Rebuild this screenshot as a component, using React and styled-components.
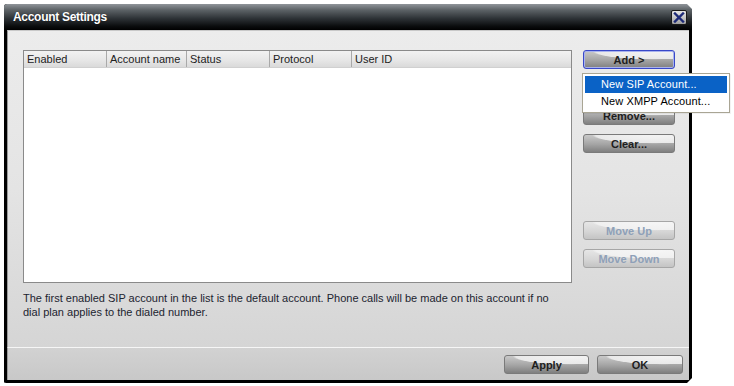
import React from "react";
import styled, { createGlobalStyle, css } from "styled-components";

const GlobalStyle = createGlobalStyle`
  html, body {
    margin: 0;
    padding: 0;
    background: #ffffff;
  }
  body {
    font-family: "Liberation Sans", Arial, sans-serif;
  }
`;

const Page = styled.div`
  padding: 4px;
  width: 734px;
  height: 386px;
  box-sizing: border-box;
`;

const Window = styled.div`
  position: relative;
  width: 688px;
  height: 379px;
  box-sizing: border-box;
  display: flex;
  flex-direction: column;
  border: 3px solid #000;
  border-top: 0;
  border-radius: 3px 0 0 2px;
  background: #d0d0d0;

  &::before,
  &::after {
    content: "";
    position: absolute;
    right: -3px;
    width: 0;
    height: 0;
    border-style: solid;
  }
  &::before {
    top: 0;
    border-width: 0 5px 5px 0;
    border-color: transparent #fff transparent transparent;
  }
  &::after {
    bottom: -3px;
    border-width: 5px 5px 0 0;
    border-color: transparent #fff transparent transparent;
  }
`;

const TitleBar = styled.div`
  height: 26px;
  flex: none;
  display: flex;
  align-items: center;
  justify-content: space-between;
  padding: 0 2px 0 9px;
  margin: 0 -3px;
  border-radius: 3px 0 0 0;
  background: linear-gradient(
    to bottom,
    #90959a 0%,
    #5e6468 22%,
    #2e3337 55%,
    #0b0d0e 85%,
    #000 100%
  );
`;

const Title = styled.span`
  color: #fff;
  font-weight: bold;
  font-size: 12px;
  letter-spacing: -0.3px;
  text-shadow: 0 0 1px rgba(0, 0, 0, 0.6);
`;

const CloseButton = styled.div`
  width: 16px;
  height: 15px;
  margin-right: 3px;
  margin-top: 1px;
  box-sizing: border-box;
  border: 1px solid #1a1a1a;
  border-radius: 2px;
  background: linear-gradient(to bottom, #e6e6e6 0%, #c6c6c6 50%, #9e9e9e 100%);
  display: flex;
  align-items: center;
  justify-content: center;
`;

const Body = styled.div`
  height: 317px;
  flex: none;
  box-sizing: border-box;
  padding: 19px 13px 0 15px;
  display: flex;
  flex-direction: column;
  border-top: 1px solid #c8c8c8;
  border-left: 1px solid #9a9a9a;
  background: linear-gradient(to bottom, #ececec 0%, #e4e4e4 50%, #d5d5d5 100%);
`;

const Main = styled.div`
  display: flex;
  gap: 11px;
`;

const Table = styled.div`
  width: 549px;
  height: 233px;
  box-sizing: border-box;
  border: 1px solid #8a8a8a;
  background: #fff;
  display: flex;
  flex-direction: column;
`;

const HeaderRow = styled.div`
  height: 16px;
  display: flex;
  background: linear-gradient(to bottom, #f2f2f2 0%, #e6e6e6 60%, #dadada 100%);
  border-bottom: 1px solid #d0d0d0;
`;

const HeaderCell = styled.div`
  width: ${p => (p.$w ? `${p.$w}px` : "auto")};
  flex: ${p => (p.$w ? "none" : "1")};
  box-sizing: border-box;
  padding-left: 3px;
  font-size: 11px;
  line-height: 16px;
  color: #222;
  border-right: ${p => (p.$w ? "1px solid #a9a9a9" : "0")};
`;

const Side = styled.div`
  position: relative;
  width: 92px;
  display: flex;
  flex-direction: column;
  gap: 9px;
`;

const Button = styled.div`
  height: 19px;
  width: ${p => p.$w || 92}px;
  box-sizing: border-box;
  border: 1px solid #7a7a7a;
  border-radius: 3px;
  display: flex;
  align-items: center;
  justify-content: center;
  font-size: 11px;
  font-weight: bold;
  color: #1e1e1e;
  background: radial-gradient(
      ellipse 130% 95% at 78% 0%,
      #f4f4f4 0%,
      #e9e9e9 50%,
      rgba(233, 233, 233, 0) 53%
    ),
    linear-gradient(to bottom, #c9c9c9 0%, #a4a4a4 55%, #7f7f7f 100%);
  margin-top: ${p => p.$gapTop || 0}px;

  ${p =>
    p.$focused &&
    css`
      border-color: #3848c8;
      box-shadow: inset 0 0 0 1px #a8b2ee;
    `}

  ${p =>
    p.$disabled &&
    css`
      border-color: #a6a6a6;
      color: #8ea0b8;
      background: radial-gradient(
          ellipse 130% 95% at 78% 0%,
          #f6f6f6 0%,
          #f0f0f0 50%,
          rgba(240, 240, 240, 0) 53%
        ),
        linear-gradient(to bottom, #e6e6e6 0%, #d6d6d6 55%, #c4c4c4 100%);
    `}
`;

const Menu = styled.div`
  position: absolute;
  top: 23px;
  left: -1px;
  width: 148px;
  box-sizing: border-box;
  padding: 2px;
  border: 1px solid #a9a594;
  background: #fff;
  z-index: 2;
  box-shadow: 1px 1px 0 rgba(0, 0, 0, 0.05);
`;

const MenuItem = styled.div`
  height: 17px;
  line-height: 17px;
  padding-left: 16px;
  font-size: 11px;
  letter-spacing: 0.1px;
  color: ${p => (p.$active ? "#fff" : "#000")};
  background: ${p => (p.$active ? "#0a62c6" : "transparent")};
`;

const Note = styled.p`
  margin: 8px 0 0 0;
  font-size: 11px;
  line-height: 14px;
  color: #1c2430;
`;

const Footer = styled.div`
  flex: 1;
  display: flex;
  justify-content: flex-end;
  align-items: flex-start;
  gap: 8px;
  padding: 7px 6px 0 0;
  border-top: 1px solid #f6f6f6;
  border-left: 1px solid #9a9a9a;
  background: linear-gradient(to bottom, #d2d2d2 0%, #c8c8c8 100%);
`;

const CloseIcon = () => (
  <svg width="12" height="11" viewBox="0 0 12 11">
    <path
      d="M2 1.5 L10 9.5 M10 1.5 L2 9.5"
      stroke="#1d2a78"
      strokeWidth="2.4"
      strokeLinecap="square"
    />
  </svg>
);

const columns = [
  { label: "Enabled", w: 83 },
  { label: "Account name", w: 80 },
  { label: "Status", w: 83 },
  { label: "Protocol", w: 82 },
  { label: "User ID" },
];

export default function App() {
  return (
    <Page>
      <GlobalStyle />
      <Window>
        <TitleBar>
          <Title>Account Settings</Title>
          <CloseButton>
            <CloseIcon />
          </CloseButton>
        </TitleBar>
        <Body>
          <Main>
            <Table>
              <HeaderRow>
                {columns.map(c => (
                  <HeaderCell key={c.label} $w={c.w}>
                    {c.label}
                  </HeaderCell>
                ))}
              </HeaderRow>
            </Table>
            <Side>
              <Button $focused>Add &gt;</Button>
              {/* hidden under the open menu */}
              <Button aria-hidden="true" />
              <Button>Remove...</Button>
              <Button>Clear...</Button>
              <Button $disabled $gapTop={59}>
                Move Up
              </Button>
              <Button $disabled>Move Down</Button>
              <Menu>
                <MenuItem $active>New SIP Account...</MenuItem>
                <MenuItem>New XMPP Account...</MenuItem>
              </Menu>
            </Side>
          </Main>
          <Note>
            The first enabled SIP account in the list is the default account. Phone
            calls will be made on this account if no
            <br />
            dial plan applies to the dialed number.
          </Note>
        </Body>
        <Footer>
          <Button $w={85}>Apply</Button>
          <Button $w={86}>OK</Button>
        </Footer>
      </Window>
    </Page>
  );
}
